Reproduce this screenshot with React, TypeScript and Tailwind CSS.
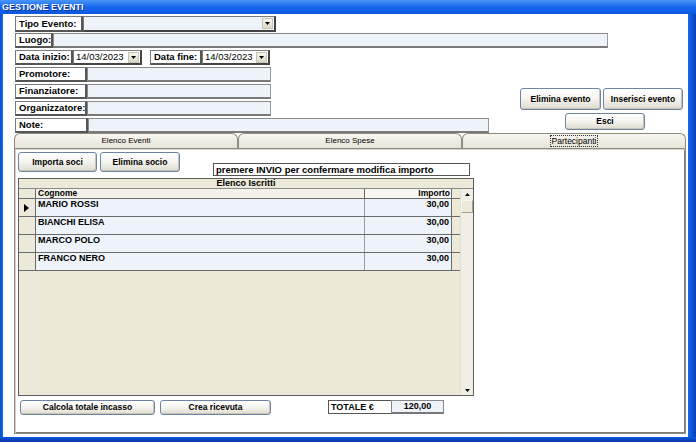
import React from "react";

const FONT = "font-['Liberation_Sans',Arial,sans-serif]";

function Label({ w, text }: { w: number; text: string }) {
  return (
    <div
      className="h-full flex items-center bg-white border border-[#7a7a7a] border-r-2 border-b-2 border-r-[#555] border-b-[#555] pl-[3px] text-[9.5px] font-bold text-black shrink-0 leading-none"
      style={{ width: w }}
    >
      {text}
    </div>
  );
}

function Field({ w, white }: { w: number; white?: boolean }) {
  return (
    <div
      className={
        "h-full border border-[#8a8a8a] border-b-2 border-r-[#9a9a9a] border-b-[#7a7a7a] shrink-0 " +
        (white ? "bg-white" : "bg-[#eef2f9]")
      }
      style={{ width: w }}
    />
  );
}

function DropArrow() {
  return (
    <div className="w-[11px] h-[11px] my-auto mr-[1px] bg-linear-to-b from-[#f6f5ef] to-[#dcd8c8] border border-[#c8c4b0] flex items-center justify-center shrink-0">
      <svg width="5" height="3" viewBox="0 0 5 3">
        <path d="M0 0h5L2.5 3z" fill="#000" />
      </svg>
    </div>
  );
}

function Combo({ w, value, white }: { w: number; value?: string; white?: boolean }) {
  return (
    <div
      className={
        "h-full flex items-center border border-[#7a7a7a] border-b-2 border-r-2 border-r-[#444] border-b-[#444] shrink-0 " +
        (white ? "bg-white" : "bg-[#eef2f9]")
      }
      style={{ width: w }}
    >
      <span className="flex-1 pl-[2px] text-[9.5px] leading-none text-black">{value}</span>
      <DropArrow />
    </div>
  );
}

function XpButton({ w, h, text, className = "" }: { w: number; h: number; text: string; className?: string }) {
  return (
    <div
      className={
        "flex items-center justify-center rounded-[3px] border border-[#6f84a3] bg-linear-to-b from-white via-[#f4f3ee] to-[#dedbcf] text-[8.5px] font-bold text-black shrink-0 leading-none shadow-[inset_-1px_-1px_0_#c9c5b4] " +
        className
      }
      style={{ width: w, height: h }}
    >
      {text}
    </div>
  );
}

const rows = [
  { name: "MARIO ROSSI", imp: "30,00" },
  { name: "BIANCHI ELISA", imp: "30,00" },
  { name: "MARCO POLO", imp: "30,00" },
  { name: "FRANCO NERO", imp: "30,00" },
];

function Grid() {
  return (
    <div className="ml-[1px] mt-[2px] w-[456px] h-[218px] border border-[#5e5e5e] bg-[#ece9d8] flex flex-col">
      <div className="h-[10px] border-b border-[#8a8a8a] flex items-center justify-center text-[9px] font-bold leading-none text-black">
        Elenco Iscritti
      </div>
      <div className="flex flex-1">
        <div className="w-[441px] flex flex-col">
          {/* intestazione */}
          <div className="flex h-[10px] border-b border-[#6b6b6b]">
            <div className="w-[17px] border-r border-[#6b6b6b]" />
            <div className="w-[329px] border-r border-[#6b6b6b] bg-[#f3f1e8] pl-[2px] text-[8.5px] font-bold leading-[9px] text-black">
              Cognome
            </div>
            <div className="w-[87px] border-r border-[#6b6b6b] bg-[#f7f6f1] pr-[1px] text-right text-[8.5px] font-bold leading-[9px] text-black">
              Importo
            </div>
          </div>
          {rows.map((r, i) => (
            <div key={r.name} className="flex h-[18px] border-b border-[#6b6b6b]">
              <div className="w-[17px] border-r border-[#6b6b6b] bg-[#ece9d8] flex items-center pl-[5px]">
                {i === 0 && (
                  <svg width="5" height="8" viewBox="0 0 5 8">
                    <path d="M0 0l5 4-5 4z" fill="#000" />
                  </svg>
                )}
              </div>
              <div className="w-[329px] border-r border-[#9a9a9a] bg-[#eef2f9] pl-[2px] text-[9px] font-bold leading-[10px] text-black">
                {r.name}
              </div>
              <div className="w-[87px] border-r border-[#6b6b6b] bg-[#eef2f9] pr-[2px] text-right text-[9px] font-bold leading-[10px] text-black">
                {r.imp}
              </div>
            </div>
          ))}
        </div>
        <div className="w-[13px] ml-auto flex flex-col bg-[#f1efe5] border-l border-[#e4e1d3]">
          <div className="h-[10px] flex items-center justify-center">
            <svg width="5" height="3" viewBox="0 0 5 3">
              <path d="M0 3h5L2.5 0z" fill="#000" />
            </svg>
          </div>
          <div className="h-[13px] mt-[1px] border border-[#f8f7f2] border-r-[#a8a594] border-b-[#a8a594] bg-[#ece9d8]" />
          <div className="flex-1" />
          <div className="h-[10px] flex items-center justify-center">
            <svg width="5" height="3" viewBox="0 0 5 3">
              <path d="M0 0h5L2.5 3z" fill="#000" />
            </svg>
          </div>
        </div>
      </div>
    </div>
  );
}

function Tab({ text, selected }: { text: string; selected?: boolean }) {
  return (
    <div className="flex-1 h-full rounded-t-[6px] border border-b-0 border-[#8c8a80] bg-linear-to-b from-[#f7f6f0] to-[#e7e4d6] flex items-center justify-center text-[8px] leading-none text-black">
      {selected ? (
        <span className="border border-dotted border-[#333] px-[1px] py-[1px] text-[8.5px]">{text}</span>
      ) : (
        text
      )}
    </div>
  );
}

export default function App() {
  return (
    <div className={"w-[696px] h-[442px] flex flex-col bg-[#0a52d8] overflow-hidden " + FONT}>
      {/* barra del titolo */}
      <div className="h-[14px] shrink-0 bg-linear-to-b from-[#4a95f8] via-[#1667ee] to-[#0a57e0] flex items-center pl-[2px]">
        <span className="text-[9px] font-bold leading-none text-white [text-shadow:1px_1px_0_#0a2f8a]">GESTIONE EVENTI</span>
      </div>

      <div className="flex-1 flex">
        <div className="w-[3px] bg-linear-to-r from-[#0a4fd0] to-[#166af0]" />
        <div className="w-[685px] h-[423px] bg-white flex flex-col">
          <div className="pl-[12px] pt-[2px] flex flex-col">
            <div className="flex h-[16px]">
              <Label w={68} text="Tipo Evento:" />
              <Combo w={193} />
            </div>
            <div className="flex h-[15px] mt-[1px]">
              <Label w={38} text="Luogo:" />
              <Field w={555} />
            </div>
            <div className="flex h-[15px] mt-[2px]">
              <Label w={58} text="Data inizio:" />
              <Combo w={69} value="14/03/2023" white />
              <div className="w-[8px]" />
              <Label w={52} text="Data fine:" />
              <Combo w={68} value="14/03/2023" white />
            </div>
            <div className="flex">
              <div className="w-[474px] flex flex-col">
                <div className="flex h-[15px] mt-[2px]">
                  <Label w={72} text="Promotore:" />
                  <Field w={184} />
                </div>
                <div className="flex h-[15px] mt-[2px]">
                  <Label w={72} text="Finanziatore:" />
                  <Field w={184} />
                </div>
                <div className="flex h-[15px] mt-[2px]">
                  <Label w={72} text="Organizzatore:" />
                  <Field w={184} />
                </div>
                <div className="flex h-[15px] mt-[2px]">
                  <Label w={73} text="Note:" />
                  <Field w={401} />
                </div>
              </div>
              <div className="ml-[31px] mt-[23px] flex flex-col">
                <div className="flex gap-[2px]">
                  <XpButton w={81} h={22} text="Elimina evento" />
                  <XpButton w={80} h={22} text="Inserisci evento" />
                </div>
                <XpButton w={80} h={17} text="Esci" className="ml-[45px] mt-[3px]" />
              </div>
            </div>
          </div>

          {/* schede */}
          <div className="ml-[11px] w-[672px] flex flex-col">
            <div className="h-[15px] flex">
              <Tab text="Elenco Eventi" />
              <Tab text="Elenco Spese" />
              <Tab text="Partecipanti" selected />
            </div>
            <div className="h-[286px] border border-[#8a8a8a] shadow-[inset_1px_1px_0_#d6d3c4,inset_-1px_-1px_0_#7c7c7c] bg-white pl-[2px] pt-[3px] flex flex-col">
              <div className="flex">
                <XpButton w={79} h={20} text="Importa soci" className="ml-[1px]" />
                <XpButton w={80} h={20} text="Elimina socio" className="ml-[3px]" />
                <div className="ml-[33px] mt-[11px] w-[257px] h-[13px] border border-[#555] bg-white flex items-center pl-[2px] text-[9.5px] font-bold leading-none text-black">
                  premere INVIO per confermare modifica importo
                </div>
              </div>
              <Grid />
              <div className="flex mt-[4px] items-start">
                <XpButton w={135} h={15} text="Calcola totale incasso" className="ml-[3px]" />
                <XpButton w={111} h={15} text="Crea ricevuta" className="ml-[5px]" />
                <div className="ml-[57px] w-[63px] h-[14px] border border-[#555] border-r-0 bg-white flex items-center pl-[2px] text-[9px] font-bold leading-none text-black">
                  TOTALE €
                </div>
                <div className="w-[53px] h-[14px] border border-[#888] border-b-2 border-b-[#777] bg-[#eef2f9] flex items-center justify-center text-[9px] font-bold leading-none text-black">
                  120,00
                </div>
              </div>
            </div>
          </div>
        </div>
        <div className="flex-1 bg-linear-to-r from-[#166af0] to-[#0a3fb8]" />
      </div>
      <div className="h-[5px] shrink-0 bg-linear-to-b from-[#0a5ae6] to-[#0835a0]" />
    </div>
  );
}
